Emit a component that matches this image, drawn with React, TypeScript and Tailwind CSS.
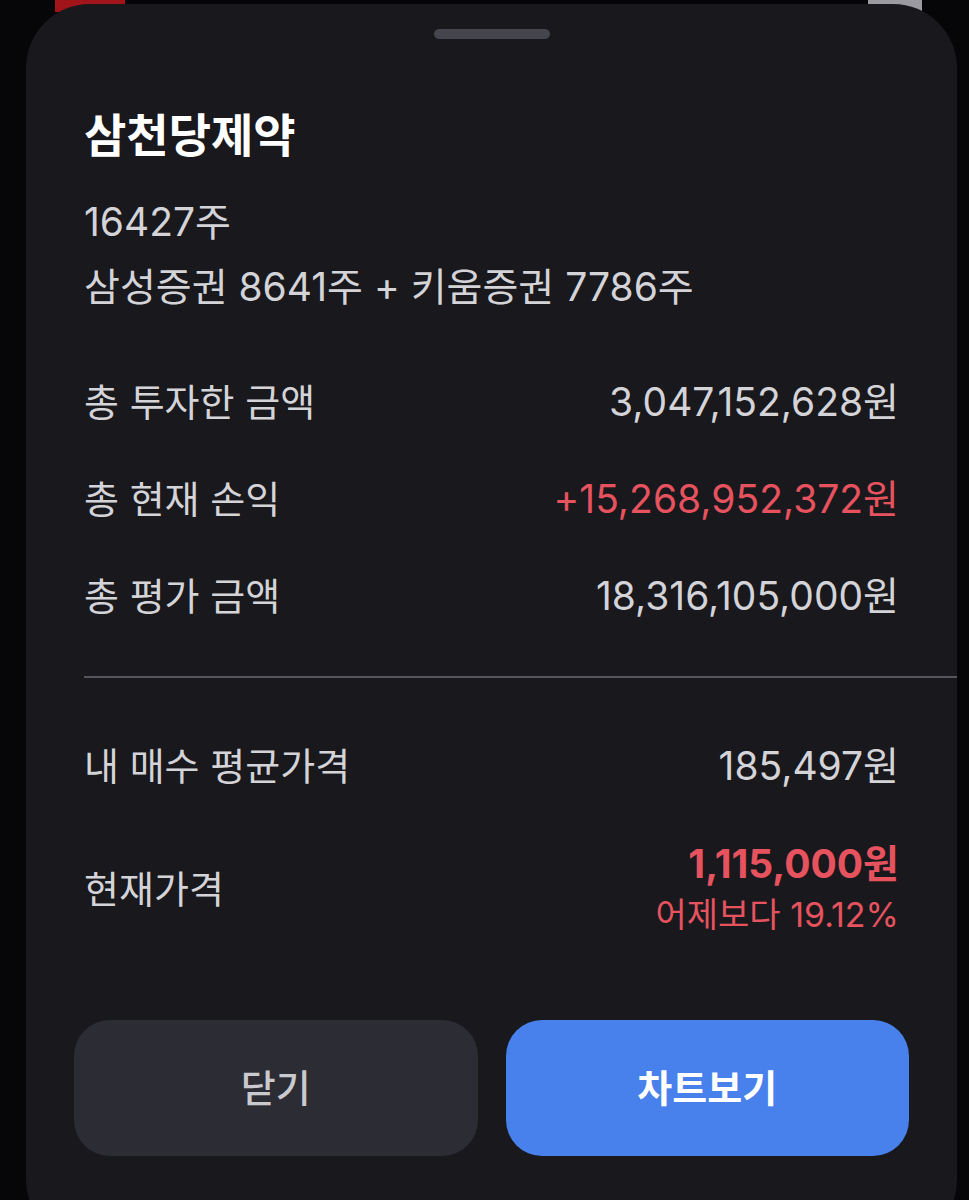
import React from "react";

const font = { fontFamily: '"Inter", "Noto Sans CJK KR", sans-serif' };

function Row({ label, value, red }: { label: string; value: string; red?: boolean }) {
  return (
    <div className="flex h-[97px] items-center justify-between">
      <span className="text-[38px] text-[#d3d3d8]">{label}</span>
      <span className={`text-[39px] ${red ? "text-[#e6535e]" : "text-[#d3d3d8]"}`}>{value}</span>
    </div>
  );
}

export default function App() {
  return (
    <div className="relative h-[1200px] w-full overflow-hidden bg-[#060608]" style={font}>
      <div className="absolute left-[55px] top-0 h-[12px] w-[70px] bg-[#a0141a]" />
      <div className="absolute left-[868px] top-0 h-[12px] w-[54px] bg-[#9a9aa0]" />
      <div className="relative ml-[26px] mt-[4px] h-[1240px] w-[931px] rounded-[64px] bg-[#18181d] px-[58px]">
        <div className="pt-[25px]">
          <div className="mx-auto h-[10px] w-[116px] rounded-full bg-[#45454d]" />
        </div>
        <div className="mt-[71px] text-[46px] font-bold leading-[50px] text-white">삼천당제약</div>
        <div className="mt-[29px] text-[39px] leading-[65px] text-[#d3d3d8]">16427주</div>
        <div className="text-[39px] leading-[65px] text-[#d3d3d8]">삼성증권 8641주 + 키움증권 7786주</div>
        <div className="mt-[35px]">
          <Row label="총 투자한 금액" value="3,047,152,628원" />
          <Row label="총 현재 손익" value="+15,268,952,372원" red />
          <Row label="총 평가 금액" value="18,316,105,000원" />
        </div>
        <div className="-mr-[58px] mt-[31px] h-[2px] bg-[#55555b]" />
        <div className="mt-[40px]">
          <Row label="내 매수 평균가격" value="185,497원" />
        </div>
        <div className="mt-[14px] flex h-[120px] items-center justify-between">
          <span className="text-[38px] text-[#d3d3d8]">현재가격</span>
          <div className="flex flex-col items-end">
            <span className="text-[39px] font-bold leading-[51px] text-[#e6535e]">1,115,000원</span>
            <span className="text-[34px] leading-[51px] text-[#e6535e]">어제보다 19.12%</span>
          </div>
        </div>
        <div className="-mx-[10px] mt-[71px] flex gap-[28px]">
          <button className="flex h-[136px] flex-1 items-center justify-center rounded-[36px] bg-[#2c2c34] text-[38px] font-medium text-[#c9c9ce]">
            닫기
          </button>
          <button className="flex h-[136px] flex-1 items-center justify-center rounded-[36px] bg-[#4881ec] text-[38px] font-semibold text-white">
            차트보기
          </button>
        </div>
      </div>
    </div>
  );
}
